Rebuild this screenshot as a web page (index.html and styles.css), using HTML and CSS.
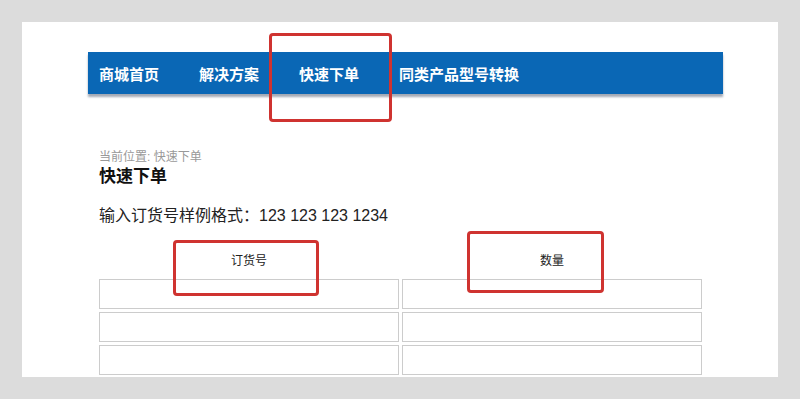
FILE: index.html
```html
<!DOCTYPE html>
<html lang="zh-CN">
<head>
  <meta charset="UTF-8">
  <title>快速下单</title>
  <link rel="stylesheet" href="styles.css">
</head>
<body>
  <div class="page">
    <div class="nav">
      <a class="nav-item">商城首页</a>
      <a class="nav-item">解决方案</a>
      <a class="nav-item">快速下单</a>
      <a class="nav-item">同类产品型号转换</a>
    </div>

    <div class="content">
      <div class="crumb">当前位置: 快速下单</div>
      <h1>快速下单</h1>
      <p class="hint">输入订货号样例格式：123 123 123 1234</p>

      <div class="order-grid">
        <div class="col-head">订货号</div>
        <div class="col-head">数量</div>
        <input type="text">
        <input type="text">
        <input type="text">
        <input type="text">
        <input type="text">
        <input type="text">
      </div>
    </div>

    <div class="mark mark-nav"></div>
    <div class="mark mark-code"></div>
    <div class="mark mark-qty"></div>
  </div>
</body>
</html>
```

FILE: styles.css
```css
body {
  margin: 0;
  background: #dcdcdc;
  font-family: "Liberation Sans", "Noto Sans CJK SC", sans-serif;
}
.page {
  position: relative;
  width: 756px;
  height: 355px;
  margin: 22px 0 0 22px;
  padding-top: 30px;
  box-sizing: border-box;
  background: white;
  overflow: hidden;
}
.nav {
  display: flex;
  height: 42px;
  margin: 0 55px 0 66px;
  padding-left: 11px;
  background: #0a67b5;
  box-shadow: 0 3px 2px rgba(90, 100, 120, 0.55);
}
.nav-item {
  margin-right: 40px;
  color: white;
  font-family: "Noto Sans CJK SC", sans-serif;
  font-weight: bold;
  font-size: 15px;
  line-height: 44px;
}
.content {
  padding-left: 77px;
}
.crumb {
  margin-top: 56px;
  color: #999;
  font-size: 12px;
  line-height: 14px;
}
h1 {
  margin: 1px 0 0;
  font-family: "Noto Sans CJK SC", sans-serif;
  font-size: 17px;
  font-weight: bold;
  line-height: 20px;
  color: #111;
}
.hint {
  margin: 21px 0 0;
  font-size: 16px;
  line-height: 20px;
  color: #222;
}
.order-grid {
  display: grid;
  grid-template-columns: 300px 300px;
  grid-template-rows: 25px;
  grid-auto-rows: 30px;
  gap: 3px;
  margin-top: 25px;
}
.col-head {
  text-align: center;
  font-size: 12px;
  line-height: 20px;
  color: #222;
}
.order-grid input {
  margin: 0;
  border: 1px solid #ccc;
  box-sizing: border-box;
  height: 30px;
}
.mark {
  position: absolute;
  border: 3px solid #cf3330;
  border-radius: 4px;
  box-sizing: border-box;
}
.mark-nav {
  left: 247px;
  top: 11px;
  width: 123px;
  height: 89px;
}
.mark-code {
  left: 151px;
  top: 218px;
  width: 146px;
  height: 56px;
}
.mark-qty {
  left: 445px;
  top: 209px;
  width: 137px;
  height: 62px;
}
```
